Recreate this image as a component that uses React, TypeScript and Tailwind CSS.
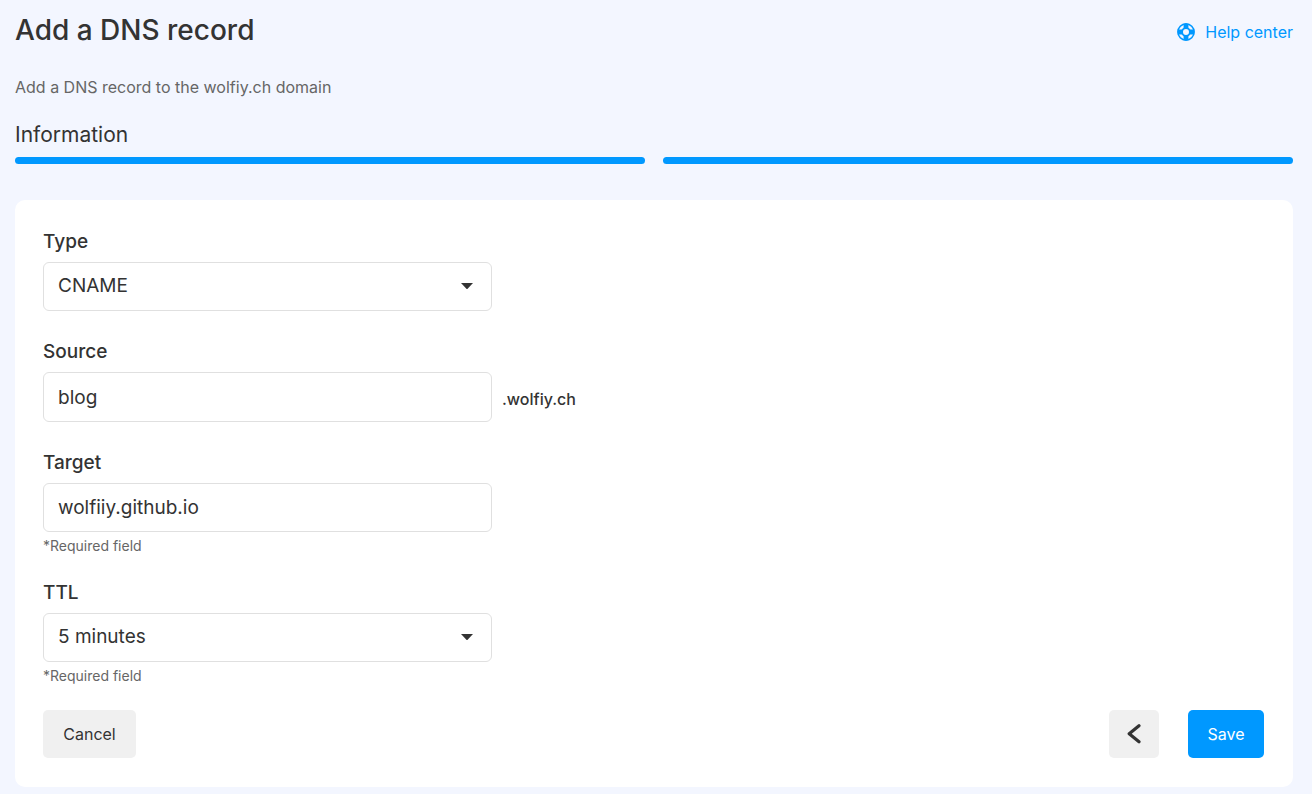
import { useState } from 'react'
import type { ReactNode } from 'react'

const recordTypes = ['A', 'AAAA', 'CNAME', 'MX', 'TXT']
const ttlOptions = ['5 minutes', '1 hour', '12 hours', '1 day']

const controlClass =
  'block w-full appearance-none rounded-md border border-[#e0e0e0] bg-white px-[14px] text-[19px] leading-6 text-[#333333] outline-none focus:border-[#0098ff]'

function LifeRing() {
  return (
    <svg viewBox="0 0 18 18" className="size-[18px]" fill="none" aria-hidden="true">
      <circle cx="9" cy="9" r="8.1" stroke="currentColor" strokeWidth="1.6" />
      <circle cx="9" cy="9" r="3.9" stroke="currentColor" strokeWidth="1.8" />
      <path d="M9 .8v4.8M9 12.4v4.8M.8 9h4.8M12.4 9h4.8" stroke="currentColor" strokeWidth="4.8" />
    </svg>
  )
}

function Field({
  id,
  label,
  required,
  children,
}: {
  id: string
  label: string
  required?: boolean
  children: ReactNode
}) {
  return (
    <div>
      <label htmlFor={id} className="mb-2 block pt-px text-[19px] leading-6 font-medium">
        {label}
      </label>
      {children}
      {required && <p className="mt-1 -mb-1 text-sm leading-5 text-[#666666]">*Required field</p>}
    </div>
  )
}

function Select({
  id,
  value,
  options,
  onChange,
}: {
  id: string
  value: string
  options: string[]
  onChange: (value: string) => void
}) {
  return (
    <div className="relative w-full max-w-[449px]">
      <select
        id={id}
        value={value}
        onChange={(event) => onChange(event.target.value)}
        className={`${controlClass} h-[49px] pb-[2px]`}
      >
        {options.map((option) => (
          <option key={option}>{option}</option>
        ))}
      </select>
      <svg
        viewBox="0 0 12 6"
        className="pointer-events-none absolute top-[21px] right-[19px] h-[6px] w-3 text-[#333333]"
        aria-hidden="true"
      >
        <path d="M0 0h12L6.6 5.7a1 1 0 0 1-1.2 0z" fill="currentColor" />
      </svg>
    </div>
  )
}

export default function App() {
  const [type, setType] = useState('CNAME')
  const [source, setSource] = useState('blog')
  const [target, setTarget] = useState('wolfiiy.github.io')
  const [ttl, setTtl] = useState('5 minutes')

  return (
    <div className="min-h-screen bg-[#f3f6ff] pt-[10px] pr-[19px] pb-[7px] pl-[15px] font-['Inter','Liberation_Sans',sans-serif] text-[#333333]">
      <header className="flex items-center justify-between">
        <h1 className="text-[28px] leading-10 font-medium">Add a DNS record</h1>
        <a
          href="#help"
          className="flex items-center gap-[10px] pt-[3px] text-base leading-6 text-[#0098ff]"
        >
          <LifeRing />
          Help center
        </a>
      </header>

      <p className="mt-[25px] text-base leading-6 text-[#666666]">
        Add a DNS record to the wolfiy.ch domain
      </p>

      <h2 className="mt-5 text-[21px] leading-8">Information</h2>
      <div className="mt-[6px] grid grid-cols-2 gap-[18px]">
        <div className="h-[7px] rounded-full bg-[#0098ff]" />
        <div className="h-[7px] rounded-full bg-[#0098ff]" />
      </div>

      <form
        onSubmit={(event) => event.preventDefault()}
        className="mt-9 flex flex-col gap-7 rounded-[10px] bg-white py-[29px] pr-[29px] pl-7"
      >
        <Field id="type" label="Type">
          <Select id="type" value={type} options={recordTypes} onChange={setType} />
        </Field>

        <Field id="source" label="Source">
          <div className="flex items-center gap-[10px]">
            <div className="w-full max-w-[449px]">
              <input
                id="source"
                type="text"
                value={source}
                onChange={(event) => setSource(event.target.value)}
                className={`${controlClass} h-[50px]`}
              />
            </div>
            <span className="pt-1 text-base leading-6 font-medium">.wolfiy.ch</span>
          </div>
        </Field>

        <Field id="target" label="Target" required>
          <div className="w-full max-w-[449px]">
            <input
              id="target"
              type="text"
              value={target}
              onChange={(event) => setTarget(event.target.value)}
              className={`${controlClass} h-[49px]`}
            />
          </div>
        </Field>

        <Field id="ttl" label="TTL" required>
          <Select id="ttl" value={ttl} options={ttlOptions} onChange={setTtl} />
        </Field>

        <div className="flex items-center justify-between">
          <button
            type="button"
            className="h-12 w-[93px] rounded-[5px] bg-[#f0f0f0] text-base hover:bg-[#e6e6e6]"
          >
            Cancel
          </button>
          <div className="flex gap-[29px]">
            <button
              type="button"
              aria-label="Previous step"
              className="grid h-12 w-[50px] place-items-center rounded-[5px] bg-[#f0f0f0] hover:bg-[#e6e6e6]"
            >
              <svg viewBox="0 0 14 20" className="h-5 w-[14px]" fill="none" aria-hidden="true">
                <path
                  d="M12 1.8 2.2 9.8l9.8 8"
                  stroke="currentColor"
                  strokeWidth="3.2"
                  strokeLinecap="round"
                  strokeLinejoin="round"
                />
              </svg>
            </button>
            <button
              type="submit"
              className="h-12 w-[76px] rounded-[5px] bg-[#0098ff] text-base text-white hover:bg-[#0088e6]"
            >
              Save
            </button>
          </div>
        </div>
      </form>
    </div>
  )
}
